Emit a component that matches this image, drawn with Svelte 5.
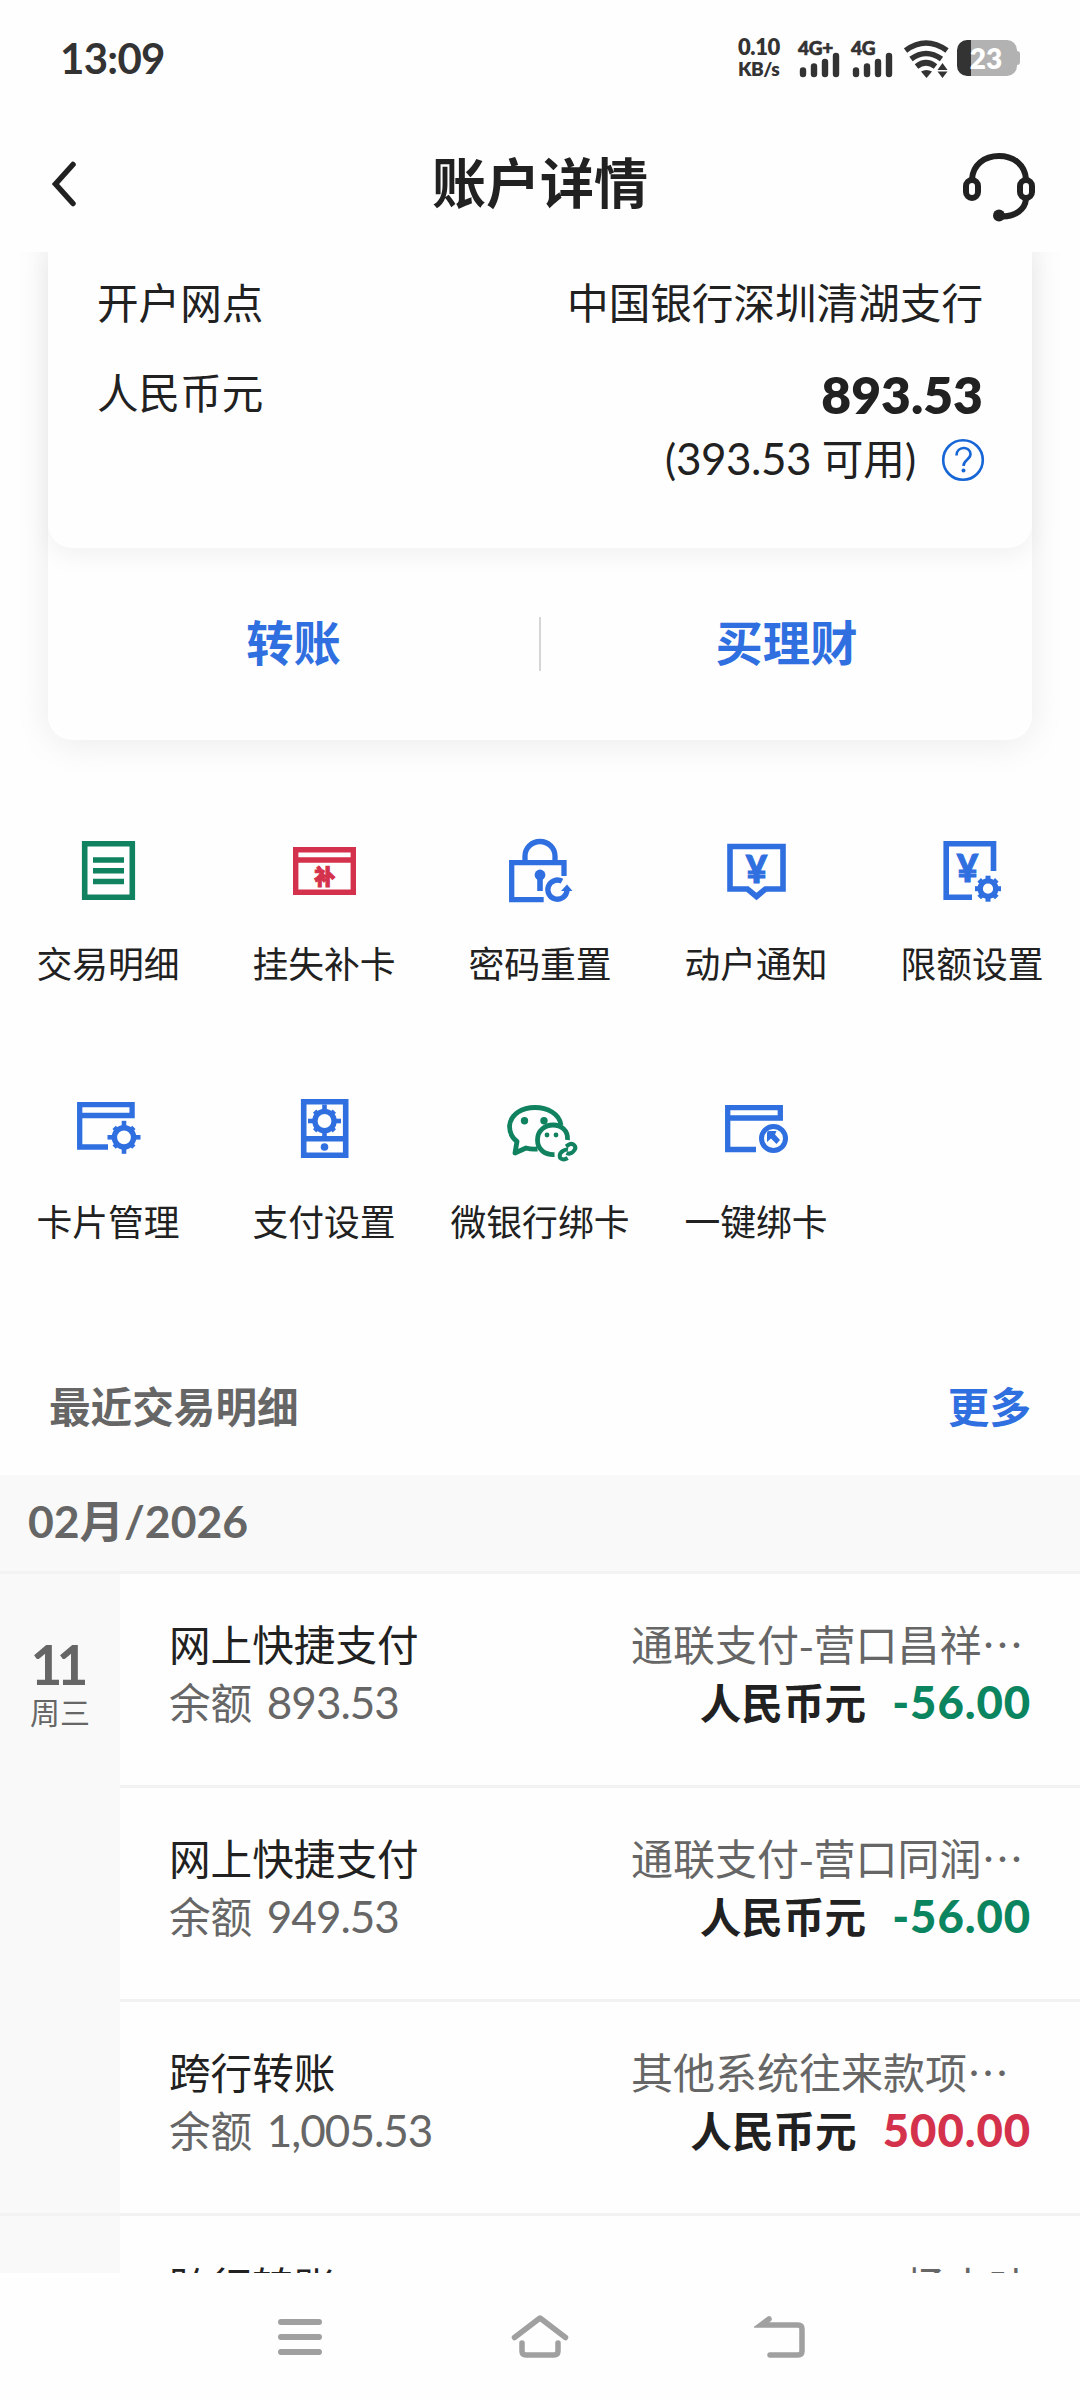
<script lang="ts">
    type Action = { icon: string; label: string; tone: string };
    type Transaction = { title: string; balance: string; remark: string; amount: string };

    const actions: Action[] = [
        { icon: 'list', label: '交易明细', tone: 'green' },
        { icon: 'reissue', label: '挂失补卡', tone: 'red' },
        { icon: 'lock', label: '密码重置', tone: 'blue' },
        { icon: 'notice', label: '动户通知', tone: 'blue' },
        { icon: 'limit', label: '限额设置', tone: 'blue' },
        { icon: 'card', label: '卡片管理', tone: 'blue' },
        { icon: 'pay', label: '支付设置', tone: 'blue' },
        { icon: 'wechat', label: '微银行绑卡', tone: 'green' },
        { icon: 'bind', label: '一键绑卡', tone: 'blue' },
    ];

    const transactions: Transaction[] = [
        { title: '网上快捷支付', balance: '893.53', remark: '通联支付-营口昌祥…', amount: '-56.00' },
        { title: '网上快捷支付', balance: '949.53', remark: '通联支付-营口同润…', amount: '-56.00' },
        { title: '跨行转账', balance: '1,005.53', remark: '其他系统往来款项…', amount: '500.00' },
    ];

    const gearAngles = [0, 45, 90, 135, 180, 225, 270, 315];
</script>

{#snippet signal(label: string)}
    <svg class="signal" width="44" height="44" viewBox="0 0 44 44">
        <text x="0" y="19" font-size="19" font-weight="900" fill="#333" stroke="#333" stroke-width="0.6">{label}</text>
        <g stroke="#333" stroke-width="6.4" stroke-linecap="round">
            <path d="M5 34.5v3.5M16 30.5v7.5M27 26v12M38 20v18" />
        </g>
    </svg>
{/snippet}

{#snippet gear(cx: number, cy: number, r: number, reach: number, short: number, width: number)}
    <circle {cx} {cy} {r} stroke-width="5.4" />
    {#each gearAngles as angle}
        <path
            d="M{cx} {cy - r - 1}V{cy - (angle % 90 ? short : reach)}"
            stroke-width={width}
            transform="rotate({angle} {cx} {cy})"
        />
    {/each}
{/snippet}

<div class="screen">
    <div class="status-bar">
        <span class="time">13:09</span>
        <div class="status-icons">
            <div class="speed"><span>0.10</span><span class="unit">KB/s</span></div>
            {@render signal('4G+')}
            {@render signal('4G')}
            <svg class="wifi" width="46" height="40" viewBox="0 0 46 40">
                <g fill="none" stroke="#333" stroke-width="5.6">
                    <path d="M1.5 12.5Q22 -2.5 43 12.5" />
                    <path d="M7 21Q22 10 37.5 21" />
                    <path d="M12.5 28.5Q22 21 31.5 28.5" />
                </g>
                <path d="M17 33.5q5.500-3 11 0l-5.500 6.500z" fill="#333" />
                <path d="M38.5 25l5 7h-10zM33.5 33.5h10l-5 6.500z" fill="#333" />
            </svg>
            <div class="battery"><span>23</span></div>
        </div>
    </div>

    <header>
        <svg class="back" width="24" height="46" viewBox="0 0 24 46">
            <path d="M21 3.5L3.5 23L21 42.5" fill="none" stroke="#212121" stroke-width="5.5" stroke-linecap="round" />
        </svg>
        <h1>账户详情</h1>
        <svg class="service" width="74" height="70" viewBox="0 0 74 70" fill="none" stroke="#212121" stroke-width="6">
            <path d="M10 27C11 13 22 4 37 4s26 9 27 23M64 47c-1 11-11 17-23 17.500" />
            <rect x="4" y="28" width="12" height="18" rx="6" />
            <rect x="58" y="28" width="12" height="18" rx="6" />
            <circle cx="37" cy="63.5" r="6" fill="#212121" stroke="none" />
        </svg>
    </header>

    <main>
        <section class="account">
            <div class="info">
                <div class="row"><span>开户网点</span><span>中国银行深圳清湖支行</span></div>
                <div class="row"><span>人民币元</span><strong>893.53</strong></div>
                <div class="available">
                    <span>(<span class="num">393.53</span> 可用)</span>
                    <svg width="44" height="44" viewBox="0 0 44 44" fill="none" stroke="#1766d6">
                        <circle cx="22" cy="22" r="19.8" stroke-width="2.6" />
                        <path d="M15.500 17.500c0-10 14-9.500 14-1.500 0 6-7 5.500-7 12" stroke-width="2.6" />
                        <circle cx="22.5" cy="32.5" r="2" fill="#1766d6" stroke="none" />
                    </svg>
                </div>
            </div>
            <div class="buttons">
                <button>转账</button>
                <i></i>
                <button>买理财</button>
            </div>
        </section>

        <section class="actions">
            {#each actions as action}
                <div class="action {action.tone}">
                    <svg width="72" height="72" viewBox="0 0 72 72" fill="none" stroke="currentColor" stroke-width="5.6">
                        {#if action.icon === 'list'}
                            <path d="M12.700 9.700h47.600v53.500H12.700zM21 26h31M21 36.700h31M21 47.500h31" />
                        {:else if action.icon === 'reissue'}
                            <path d="M7.700 15.700h57.600v42.500H7.700zM7.700 26h57.600" stroke-width="5.4" />
                            <text x="36.8" y="50" font-size="21" font-weight="900" text-anchor="middle">补</text>
                        {:else if action.icon === 'lock'}
                            <path d="M60 42V28.700H7.700v37h32M21 28V22a15 14.500 0 0 1 30 0v6" stroke-width="5.3" />
                            <circle cx="36" cy="41" r="5.4" fill="currentColor" stroke="none" />
                            <path d="M36 42v15" />
                            <path d="M58 47.200A9.600 9.600 0 1 0 63 56.500" stroke-width="5.3" />
                            <path d="M63 50.500l5.500 6.500H57z" fill="currentColor" stroke="none" />
                        {:else if action.icon === 'notice'}
                            <path d="M10 12.500h53v42.500H45.500l-9 7.500-9-7.500H10z" />
                            <text x="36.5" y="49" font-size="37" font-weight="900" text-anchor="middle">¥</text>
                        {:else if action.icon === 'limit'}
                            <path d="M57.500 37V9.700H10.200v53.500H36" />
                            <text x="31.5" y="47.5" font-size="37" font-weight="900" text-anchor="middle">¥</text>
                            {@render gear(52, 54.7, 7.8, 13, 12.5, 5)}
                        {:else if action.icon === 'card'}
                            <path d="M36 55H7.700V12.700h52.400v10.800H7.700" stroke-width="5.3" />
                            {@render gear(52, 45.3, 9.6, 16.5, 14, 4.6)}
                        {:else if action.icon === 'pay'}
                            <path d="M15.700 9.700h42v53.500h-42zM15.700 46.700h42" />
                            <circle cx="36.5" cy="55" r="3.8" fill="currentColor" stroke="none" />
                            {@render gear(36.5, 29, 9.6, 16.5, 14, 4.6)}
                        {:else if action.icon === 'wechat'}
                            <g stroke-width="4.8" stroke-linejoin="round">
                                <path d="M57 33C54 10 8 9 5.500 34c0 7 3 12 7.500 15.500L11 61l11-5q5 1.500 11.500 1" />
                                <path d="M63.500 48C65 28 33.500 28 33.500 48c0 9 7 15 17 14.500" />
                            </g>
                            <g fill="currentColor" stroke="none">
                                <circle cx="20.5" cy="28.7" r="3.7" /><circle cx="40" cy="28.7" r="3.7" />
                                <circle cx="43" cy="43" r="2.4" /><circle cx="52" cy="43" r="2.4" />
                            </g>
                            <g stroke-width="4">
                                <path d="M62 54.500l3-2c4-2 8 2 5.500 5.500-2 3-5 4.500-8 3" />
                                <path d="M64 57.500c-3-.5-8 2.500-8.300 6 0 4 4 5 8 2.500" />
                            </g>
                        {:else}
                            <path d="M36 57.500H7.700V15.700h52.600V26H7.700" stroke-width="5.3" />
                            <circle cx="53.5" cy="46.5" r="12" stroke-width="5" />
                            <path d="M47 41q0-2 2-2h7.500l-1.500 3.500 5 5.500-3.500 4-5.500-5.500L47 50z" fill="currentColor" stroke="none" />
                        {/if}
                    </svg>
                    <span>{action.label}</span>
                </div>
            {/each}
        </section>

        <div class="recent">
            <h2>最近交易明细</h2>
            <span class="more">更多</span>
        </div>

        <div class="month">02月/2026</div>

        <div class="day">
            <div class="date"><strong>11</strong><span>周三</span></div>
            <div class="list">
                {#each transactions as item}
                    <div class="item">
                        <div class="line">
                            <span>{item.title}</span>
                            <span class="remark">{item.remark}</span>
                        </div>
                        <div class="line">
                            <span class="balance">余额 <span class="num">{item.balance}</span></span>
                            <span class="amount" class:income={!item.amount.startsWith('-')}>
                                人民币元 <b>{item.amount}</b>
                            </span>
                        </div>
                    </div>
                {/each}
            </div>
        </div>
        <div class="day">
            <div class="date next"></div>
            <div class="list">
                <div class="item">
                    <div class="line"><span>跨行转账</span><span class="balance">杨小叶</span></div>
                </div>
            </div>
        </div>
    </main>

    <nav>
        <svg width="48" height="52" viewBox="0 0 48 52" stroke="#a0a0a0" stroke-width="6" stroke-linecap="round">
            <path d="M5 9h38M5 24h38M5 39h38" />
        </svg>
        <svg width="60" height="52" viewBox="0 0 60 52" fill="none" stroke="#a0a0a0" stroke-width="5.5" stroke-linecap="round" stroke-linejoin="round">
            <path d="M4.500 24.500L30 5l25.500 19.500M12 30v8q0 4 4 4h28q4 0 4-4v-8" />
        </svg>
        <svg width="52" height="52" viewBox="0 0 52 52" fill="none" stroke="#a0a0a0" stroke-width="5.5" stroke-linecap="round">
            <path d="M15 6L7 12h37q4 0 4 4v22q0 4-4 4H16" />
        </svg>
    </nav>
</div>

<style>
    :global(body) {
        background: #fefefe;
    }

    .screen {
        width: 1080px;
        height: 2400px;
        display: flex;
        flex-direction: column;
        overflow: hidden;
        background: #fefefe;
        color: #212121;
        font-family: Lato, "Noto Sans CJK SC", sans-serif;
        font-size: 41.6px;
    }

    .status-bar {
        height: 116px;
        flex: none;
        display: flex;
        align-items: center;
        justify-content: space-between;
        padding: 0 63px 0 60px;
        color: #333;
    }

    .time {
        font-size: 42px;
        font-weight: 700;
        letter-spacing: -0.7px;
    }

    .status-icons {
        display: flex;
        align-items: center;
    }

    .speed {
        width: 44px;
        display: flex;
        flex-direction: column;
        font-size: 22px;
        line-height: 22px;
        font-weight: 800;
        letter-spacing: -0.4px;
        margin-right: 16px;
    }

    .unit {
        font-size: 19px;
    }

    .signal {
        margin-right: 9px;
        overflow: visible;
    }

    .signal text {
        letter-spacing: -0.3px;
    }

    .wifi {
        margin-right: 7px;
    }

    .battery {
        position: relative;
        width: 60px;
        height: 36px;
        border-radius: 10px;
        background: linear-gradient(to right, #333 14px, #b2b2b2 14px);
        color: #fff;
        font-size: 28px;
        font-weight: 800;
        line-height: 36px;
        text-align: center;
        text-indent: -2px;
    }

    .battery::after {
        content: "";
        position: absolute;
        left: 60px;
        top: 11px;
        width: 3px;
        height: 14px;
        border-radius: 0 3px 3px 0;
        background: #b2b2b2;
    }

    header {
        height: 136px;
        flex: none;
        display: flex;
        align-items: center;
        justify-content: space-between;
        padding: 0 44px 0 52px;
    }

    .back {
        margin-right: 42px;
    }

    .service {
        margin-top: 5px;
    }

    h1 {
        margin: 0;
        font-size: 54px;
        line-height: 60px;
        font-weight: 700;
    }

    main {
        flex: 1;
        min-height: 0;
        overflow: hidden;
    }

    /* The card is scrolled up under the header */
    .account {
        margin: -60px 48px 0;
        padding-top: 60px;
        height: 488px;
        border-radius: 0 0 24px 24px;
        box-shadow: 0 4px 36px rgba(0, 0, 0, 0.08);
    }

    .info {
        height: 296px;
        box-sizing: border-box;
        padding: 19px 49px 0;
        border-radius: 0 0 24px 24px;
        box-shadow: 0 8px 24px rgba(0, 0, 0, 0.05);
    }

    .row {
        height: 60px;
        margin-bottom: 30px;
        display: flex;
        align-items: center;
        justify-content: space-between;
    }

    .row strong {
        margin-top: 6px;
        font-size: 51.5px;
        font-weight: 800;
    }

    .available {
        margin-top: -24px;
        display: flex;
        align-items: center;
        justify-content: flex-end;
        height: 60px;
    }

    .available svg {
        margin: 5px -2px 0 25px;
    }

    .num {
        font-size: 44px;
        letter-spacing: -0.5px;
    }

    .buttons {
        height: 192px;
        display: flex;
        align-items: center;
    }

    button {
        flex: 1;
        border: 0;
        background: none;
        padding: 0 0 8px;
        color: #2f6fe0;
        font: inherit;
        font-size: 47.3px;
        font-weight: 700;
    }

    i {
        width: 2px;
        height: 54px;
        background: #d6d6d6;
    }

    .actions {
        display: grid;
        grid-template-columns: repeat(5, 216px);
        grid-auto-rows: 258px;
        padding-top: 94px;
    }

    .action {
        display: flex;
        flex-direction: column;
        align-items: center;
        font-size: 35.8px;
        line-height: 48px;
    }

    .action svg {
        margin-bottom: 35px;
        overflow: visible;
    }

    .action svg text {
        fill: currentColor;
        stroke-width: 1px;
    }

    .action span {
        color: #212121;
    }

    .green {
        color: #10825f;
    }

    .red {
        color: #d4324c;
    }

    .blue {
        color: #2f6fe0;
    }

    .recent {
        height: 125px;
        display: flex;
        align-items: center;
        justify-content: space-between;
        padding: 0 49px 15px;
        box-sizing: border-box;
    }

    h2 {
        margin: 0;
        font-size: 41.6px;
        color: #666;
    }

    .more {
        color: #2f6fe0;
        font-weight: 700;
    }

    .month {
        height: 99px;
        box-sizing: border-box;
        border-bottom: 3px solid #f3f3f3;
        background: #f9f9f9;
        padding-left: 28px;
        font-size: 44.5px;
        line-height: 92px;
        font-weight: 700;
        color: #666;
    }

    .day {
        display: flex;
    }

    .date {
        width: 120px;
        box-sizing: border-box;
        background: #f9f9f9;
        display: flex;
        flex-direction: column;
        align-items: center;
        padding-top: 63px;
        color: #666;
    }

    .date.next {
        margin-top: -3px;
        border-top: 3px solid #f3f3f3;
    }

    .date strong {
        font-size: 55px;
        line-height: 54px;
        letter-spacing: -6px;
        margin-right: 7px;
    }

    .date span {
        font-size: 30px;
        line-height: 42px;
    }

    .list {
        flex: 1;
    }

    .item {
        height: 214px;
        box-sizing: border-box;
        border-bottom: 3px solid #f2f2f2;
        padding: 40px 50px 0 49px;
    }

    .line {
        height: 57px;
        display: flex;
        align-items: center;
        justify-content: space-between;
        white-space: nowrap;
    }

    .line + .line {
        margin-top: 1px;
    }

    .remark {
        width: 399px;
        color: #666;
        font-family: "Noto Sans CJK SC", sans-serif;
        font-size: 42px;
    }

    .balance {
        color: #666;
    }

    .balance .num {
        margin-left: 4px;
        letter-spacing: -1px;
    }

    .amount {
        font-weight: 700;
    }

    .amount b {
        margin-left: 16px;
        font-size: 45.5px;
        letter-spacing: 0.9px;
        margin-right: -1px;
        color: #0b8560;
    }

    .amount.income b {
        color: #d4324c;
    }

    nav {
        height: 127px;
        flex: none;
        display: grid;
        grid-template-columns: repeat(3, 240px);
        justify-content: center;
        justify-items: center;
        padding-top: 40px;
        box-sizing: border-box;
    }
</style>
